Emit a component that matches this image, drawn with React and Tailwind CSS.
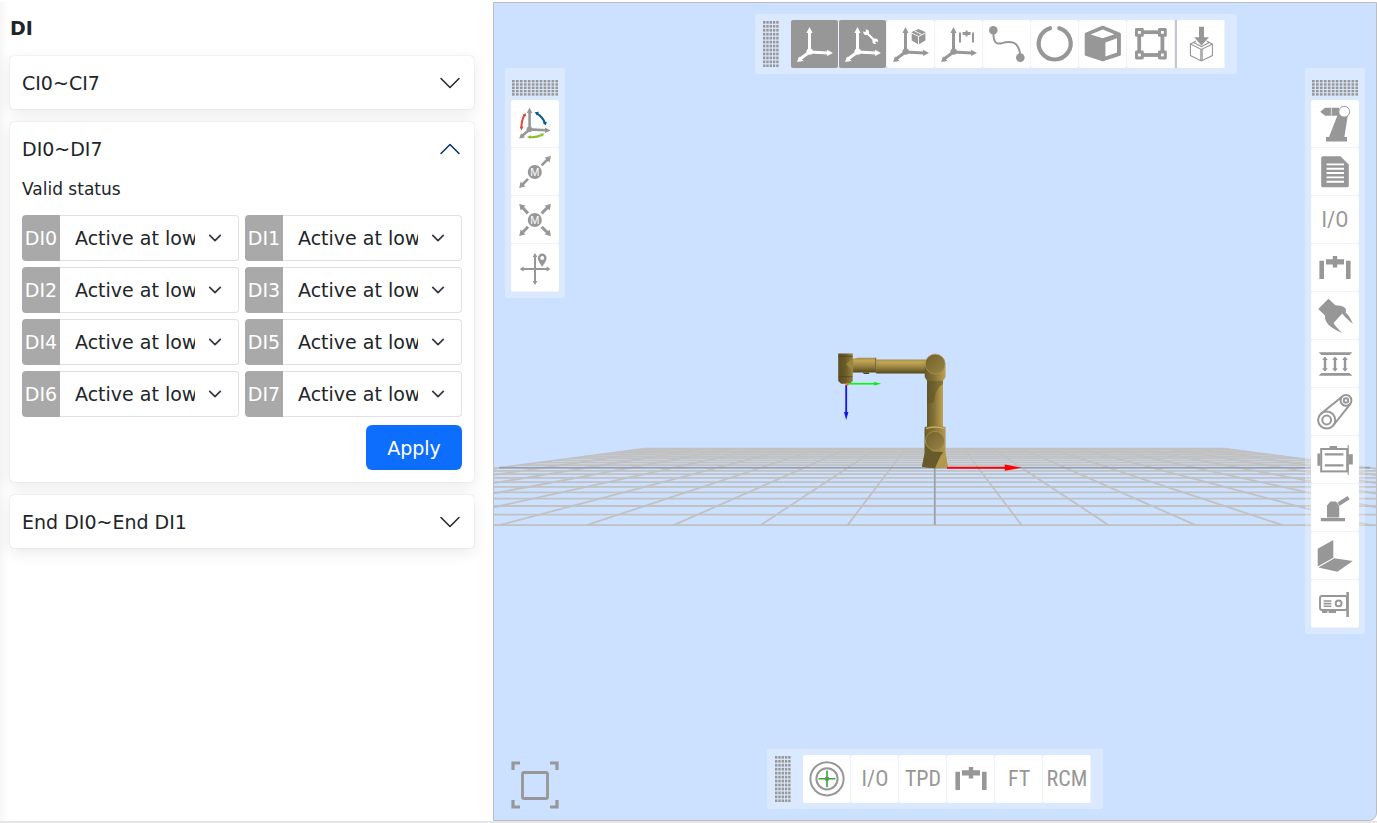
import React, { useState } from "react";
import clsx from "clsx";

const GRAY = "#979797";

// Icons, all drawn in a 48x48 box
const Icon = ({ children }) => (
  <svg viewBox="0 0 48 48" className="block h-12 w-12 shrink-0" fill="none" aria-hidden="true">
    {children}
  </svg>
);

const Axes = ({ color = GRAY }) => (
  <>
    <path d="M18.5 11V32M18.5 32L37 33M18.5 32L9 39" stroke={color} strokeWidth="3" />
    <circle cx="18.7" cy="31.6" r="3.2" fill={color} />
    <path
      d="M18.5 7L21.6 13H15.4ZM42 33L36 36V29.8ZM6 42L8 36.4L12.6 41Z"
      fill={color}
    />
  </>
);

const BaseCoordIcon = () => (
  <Icon>
    <Axes color="#fff" />
  </Icon>
);

const ToolCoordIcon = () => (
  <Icon>
    <Axes color="#fff" />
    <path d="M28 13L36 21" stroke="#fff" strokeWidth="2" />
    <circle cx="27.2" cy="12.2" r="2.8" fill="#fff" />
    <circle cx="36.2" cy="21.2" r="2.8" fill="#fff" />
    <path d="M26.6 11.4L23.6 9M36.8 22L40 25" stroke={GRAY} strokeWidth="2.2" />
  </Icon>
);

const WorkpieceCoordIcon = () => (
  <Icon>
    <Axes />
    <path d="M31.5 9L38.4 12V20.6L31.5 24.4L24.7 20.6V12Z" fill={GRAY} />
    <path d="M24.7 13L31.5 16.4L38.4 13M31.5 16V24.4M27.6 11L34.6 14.4" stroke="#fff" strokeWidth="0.9" />
  </Icon>
);

const ExtAxisCoordIcon = () => (
  <Icon>
    <Axes />
    <path d="M24 12.4H26V22.4H24ZM37 12.4H39V22.4H37ZM27.6 12H30.6V10.6H32.6V12H35.6V15H32.6V16.6H30.6V15H27.6Z" fill={GRAY} />
  </Icon>
);

const TrajectoryIcon = () => (
  <Icon>
    <path d="M10.3 11C10.3 22 12.5 24.4 18 23.4C26 21 30.5 21.6 33.4 24.6C36 28 37.3 31 37.3 37" stroke={GRAY} strokeWidth="2" />
    <circle cx="10.3" cy="10.3" r="4.3" fill={GRAY} />
    <circle cx="37.3" cy="37.6" r="4.3" fill={GRAY} />
  </Icon>
);

const RingIcon = () => (
  <Icon>
    <path d="M28.3 8.2A16 16 0 1 1 19.1 8.2" stroke={GRAY} strokeWidth="4.2" strokeLinecap="round" />
  </Icon>
);

const CubeIcon = () => (
  <Icon>
    <path
      d="M23.7 7L40.6 14V34.6L23.7 40L7 34.6V14Z"
      fill={GRAY}
      stroke={GRAY}
      strokeWidth="2.6"
      strokeLinejoin="round"
    />
    <path d="M11.7 14.5L23.7 9.6L35.4 14.2L23.7 18.2ZM26.4 22.4L38 18.2V32.6L26.4 36.4Z" fill="#fff" />
  </Icon>
);

const BoundaryIcon = () => (
  <Icon>
    <rect x="12.2" y="12.2" width="23.2" height="22.8" stroke={GRAY} strokeWidth="3.8" />
    {[[8, 8], [31, 8], [8, 30.6], [31, 30.6]].map(([x, y]) => (
      <g key={`${x}-${y}`}>
        <rect x={x} y={y} width="8.8" height="8.8" rx="1.4" fill={GRAY} />
        <rect x={x + 3} y={y + 3} width="2.8" height="2.8" fill="#fff" />
      </g>
    ))}
  </Icon>
);

const ImportIcon = () => (
  <Icon>
    <path
      d="M19 21L13.4 24V35.6L24.4 41L35.4 35.6V24L29.6 21M13.4 24L24.4 29.4L35.4 24M23.8 29.4V41M25.2 29.4V41M16.5 22.6L24.4 26.6L32.4 22.6"
      stroke={GRAY}
      strokeWidth="1.1"
    />
    <path d="M22 6.7H27V17.3H32L24.5 25.4L17.2 17.3H22Z" fill={GRAY} />
  </Icon>
);

const RotateIcon = () => (
  <Icon>
    <path d="M18.6 11V29.4L35 30.2M18.6 29.4L11 36" stroke={GRAY} strokeWidth="2.6" />
    <circle cx="18.4" cy="29.2" r="2.8" fill={GRAY} />
    <path d="M18.6 7.5L21.4 13H15.8ZM39.6 30.4L34 33V27.6ZM8.2 38.4L10 33.2L14 37.4Z" fill={GRAY} />
    <path d="M13.4 15C11.2 19 10.4 23 10.4 28" stroke="#dc4a38" strokeWidth="2" />
    <path d="M14.6 13L15.2 16.4L11.6 15ZM10.3 30.4L8.7 26.8H12.5Z" fill="#dc4a38" />
    <path d="M26 13.6C30 16 32.6 19 33.8 23" stroke="#0b5c8f" strokeWidth="2.2" />
    <path d="M23.6 12.2L28 11.8L26 15.6ZM34.8 25.6L31.6 22.8L35.8 21.8Z" fill="#0b5c8f" />
    <path d="M18.6 37C23.5 37.6 27 36.8 30.6 35" stroke="#86bf2f" strokeWidth="2" />
    <path d="M16 37L19.8 35.2L19.4 38.8ZM33.4 33.4L29.4 33.4L31.4 36.8Z" fill="#86bf2f" />
  </Icon>
);

const MotorLetter = () => (
  <>
    <circle cx="23.8" cy="24" r="7" fill={GRAY} />
    <text x="23.8" y="28" textAnchor="middle" fontSize="11" fill="#fff" fontFamily="Liberation Sans, sans-serif">
      M
    </text>
  </>
);

const SingleAxisIcon = () => (
  <Icon>
    <path d="M30.6 17.4L37 11M17 30.8L11 37" stroke={GRAY} strokeWidth="2.6" />
    <path d="M40 8L38.6 14.4L33.8 9.6ZM8.2 40L9.6 33.6L14.4 38.4Z" fill={GRAY} />
    <MotorLetter />
  </Icon>
);

const MultiAxisIcon = () => (
  <Icon>
    <path d="M30.6 17.4L37 11M17 30.8L11 37M17 17.4L11 11M30.6 30.8L37 37" stroke={GRAY} strokeWidth="3" />
    <path
      d="M40 8L38.6 14.4L33.8 9.6ZM8.2 40L9.6 33.6L14.4 38.4ZM8.2 8L9.6 14.4L14.4 9.6ZM40 40L38.6 33.6L33.8 38.4Z"
      fill={GRAY}
    />
    <MotorLetter />
  </Icon>
);

const MoveIcon = () => (
  <Icon>
    <path d="M24 12V38M12 25H36" stroke={GRAY} strokeWidth="2" />
    <path d="M24 9L26.4 13H21.6ZM24 41L26.4 37H21.6ZM8.6 25L12.6 22.6V27.4ZM39.6 25L35.6 22.6V27.4Z" fill={GRAY} />
    <path d="M31.2 23C29 19 26.8 17 26.8 14A4.4 4.4 0 0 1 35.6 14C35.6 17 33.4 19 31.2 23Z" fill={GRAY} />
    <circle cx="31.2" cy="14" r="1.9" fill="#fff" />
  </Icon>
);

const RobotIcon = () => (
  <Icon>
    <path d="M9.2 11.7L14 7.7H28V15.7H14Z" fill={GRAY} />
    <path d="M20.4 7.7V15.7" stroke="#ddd" strokeWidth="1" />
    <path d="M26.6 15L37 14L33.4 37H36V41.4H15V37H18Z" fill={GRAY} />
    <circle cx="33.2" cy="11.7" r="5.4" fill="#fff" stroke={GRAY} strokeWidth="1" />
  </Icon>
);

const DocIcon = () => (
  <Icon>
    <path d="M12 8.3H29.4L37.8 16.6V37.4Q37.8 39.3 36 39.3H12Q10.2 39.3 10.2 37.4V10.2Q10.2 8.3 12 8.3Z" fill={GRAY} />
    <path d="M15.6 16.4H33M15.6 20.7H33M15.6 25H33M15.6 29.4H33M15.6 33.8H33" stroke="#fff" strokeWidth="1.9" />
  </Icon>
);

const GripperAxisIcon = () => (
  <Icon>
    <path
      d="M8.4 16.7H13V35H8.4ZM35 16.7H39.6V35H35ZM15 15.2H21.8V12H26.2V15.2H33V20.6H26.2V23.6H21.8V20.6H15Z"
      fill={GRAY}
    />
  </Icon>
);

const ClawIcon = () => (
  <Icon>
    <path
      d="M17.4 6.7L7.3 17L14 23.6C13.4 31 19 35.6 31 41C27.4 37 24.4 34.6 22.6 31L31.2 21.6C34.6 25.6 37.6 29 42 31.8C39.6 26.4 38 23.6 34.6 20.4C36.6 15.6 32 13.6 24.4 13.2Z"
      fill={GRAY}
    />
  </Icon>
);

const ConveyorIcon = () => (
  <Icon>
    <path d="M7.6 12.3H41.4L38.6 15.1H10.4ZM10.4 33H38.6L41.4 35.8H7.6Z" fill={GRAY} />
    {[14, 24, 34].map((x) => (
      <g key={x}>
        <path d={`M${x} 18V30`} stroke={GRAY} strokeWidth="2.4" />
        <path d={`M${x} 16.4l2.8 3.6h-5.6ZM${x} 31.8l2.8-3.6h-5.6Z`} fill={GRAY} />
      </g>
    ))}
  </Icon>
);

const BeltIcon = () => (
  <Icon>
    <g stroke={GRAY} strokeWidth="2">
      <circle cx="15.7" cy="32" r="8.6" />
      <circle cx="15.7" cy="32" r="4.4" />
      <circle cx="35" cy="12.4" r="5.4" />
      <circle cx="35" cy="12.4" r="2.2" />
      <path d="M9.6 26L31 8.8M22.6 37L39.6 15.6" />
    </g>
  </Icon>
);

const MotorIcon = () => (
  <Icon>
    <rect x="10.2" y="13" width="26" height="22.4" stroke={GRAY} strokeWidth="2" />
    <path d="M13.8 18.4H32.4M13.8 29.4H32.4" stroke={GRAY} strokeWidth="2.2" />
    <path d="M37.2 9V38.8" stroke={GRAY} strokeWidth="1.2" />
    <path d="M18.6 10H26V13H18.6ZM6.4 17.4H9.4V29.8H6.4ZM37.4 18.2H41.8V28.4H37.4Z" fill={GRAY} />
  </Icon>
);

const JoystickIcon = () => (
  <Icon>
    <path d="M9.8 34H34V37.2H9.8ZM16 33.4V21.4L19.4 17.4H25L28.2 21.4V33.4Z" fill={GRAY} />
    <path d="M27.6 20.2L37.6 13.6" stroke={GRAY} strokeWidth="4" />
  </Icon>
);

const WallIcon = () => (
  <Icon>
    <path d="M6.7 16.7L22.3 8V25.7L6.7 34.4ZM23.4 26.3L41.8 29L26.4 39.7L7.3 35.4Z" fill={GRAY} />
  </Icon>
);

const DeviceIcon = () => (
  <Icon>
    <rect x="9" y="16" width="27" height="14" rx="2" stroke={GRAY} strokeWidth="1.9" />
    <path d="M12.6 21H20.4M12.6 23.6H20.4M12.6 26.2H20.4" stroke={GRAY} strokeWidth="1.6" />
    <circle cx="27.6" cy="23.4" r="2.9" stroke={GRAY} strokeWidth="1.9" />
    <path d="M36.6 12V37" stroke={GRAY} strokeWidth="2.6" />
    <path d="M11 30H16.4V33H11ZM17.6 30H25V33H17.6Z" fill={GRAY} />
  </Icon>
);

const TargetIcon = () => (
  <Icon>
    <circle cx="24" cy="23.8" r="16.6" stroke={GRAY} strokeWidth="2" />
    <circle cx="24" cy="23.8" r="10.6" stroke={GRAY} strokeWidth="2" />
    <path d="M24 15.4V32.2M15.6 23.8H32.4" stroke="#35a835" strokeWidth="1.6" />
    <circle cx="24" cy="23.8" r="2.4" fill="#5f9a5f" />
  </Icon>
);

const TextIcon = ({ children }) => (
  <span className="font-['Roboto_Condensed',Roboto,sans-serif] text-[22px] leading-none text-[#979797]">
    {children}
  </span>
);

const Handle = ({ vertical }) => {
  const cells = [];
  for (let i = 0; i < 12; i++) {
    for (let j = 0; j < 5; j++) cells.push([i * 3.95, j * 3.3]);
  }
  return (
    <svg
      viewBox={vertical ? "0 0 16 46" : "0 0 46 16"}
      className={vertical ? "h-[46px] w-4" : "h-4 w-[46px]"}
      aria-hidden="true"
    >
      {cells.map(([a, b]) => (
        <rect
          key={`${a}-${b}`}
          x={vertical ? b : a}
          y={vertical ? a : b}
          width={vertical ? 2.4 : 2.7}
          height={vertical ? 2.7 : 2.4}
          fill={GRAY}
        />
      ))}
    </svg>
  );
};

const ToolButton = ({ label, active, column, children }) => (
  <button
    type="button"
    title={label}
    aria-label={label}
    className={clsx(
      "flex h-12 w-12 shrink-0 items-center justify-center rounded-xs",
      column ? "shadow-[inset_0_-1px_0_#edf4ff]" : "shadow-[inset_-1px_0_0_#edf4ff]",
      active ? "bg-[#979797]" : "bg-white"
    )}
  >
    {children}
  </button>
);

const topTools = [
  { label: "Base coordinate", icon: <BaseCoordIcon />, active: true },
  { label: "Tool coordinate", icon: <ToolCoordIcon />, active: true },
  { label: "Workpiece coordinate", icon: <WorkpieceCoordIcon /> },
  { label: "Extended axis coordinate", icon: <ExtAxisCoordIcon /> },
  { label: "Trajectory", icon: <TrajectoryIcon /> },
  { label: "Interference ring", icon: <RingIcon /> },
  { label: "Interference cube", icon: <CubeIcon /> },
  { label: "Boundary", icon: <BoundaryIcon /> },
];

const leftTools = [
  { label: "Rotate", icon: <RotateIcon /> },
  { label: "Single axis", icon: <SingleAxisIcon /> },
  { label: "Multi axis", icon: <MultiAxisIcon /> },
  { label: "Move", icon: <MoveIcon /> },
];

const rightTools = [
  { label: "Robot", icon: <RobotIcon /> },
  { label: "Program", icon: <DocIcon /> },
  { label: "I/O", icon: <TextIcon>I/O</TextIcon> },
  { label: "Extended axis", icon: <GripperAxisIcon /> },
  { label: "Gripper", icon: <ClawIcon /> },
  { label: "Force", icon: <ConveyorIcon /> },
  { label: "Conveyor", icon: <BeltIcon /> },
  { label: "Motor", icon: <MotorIcon /> },
  { label: "Polishing", icon: <JoystickIcon /> },
  { label: "Wall", icon: <WallIcon /> },
  { label: "Device", icon: <DeviceIcon /> },
];

const bottomTools = [
  { label: "Target", icon: <TargetIcon /> },
  { label: "I/O status", icon: <TextIcon>I/O</TextIcon> },
  { label: "TPD", icon: <TextIcon>TPD</TextIcon> },
  { label: "Axis status", icon: <GripperAxisIcon /> },
  { label: "FT", icon: <TextIcon>FT</TextIcon> },
  { label: "RCM", icon: <TextIcon>RCM</TextIcon> },
];

// Perspective floor: 20 x 20 cells, horizon at y = 410
const CX = 934.6;
const depth = (i) => 1150 / (20 - i);
const steps = Array.from({ length: 21 }, (_, i) => i - 10);

const Scene = () => (
  <svg
    viewBox="493 2 884 819"
    preserveAspectRatio="xMidYMid slice"
    className="absolute inset-0 h-full w-full"
    role="img"
    aria-label="Robot model"
  >
    <defs>
      <linearGradient id="tube" x1="0" x2="1" y1="0" y2="0">
        <stop offset="0" stopColor="#665928" />
        <stop offset="0.45" stopColor="#857235" />
        <stop offset="1" stopColor="#c0a254" />
      </linearGradient>
      <linearGradient id="wrist" x1="0" x2="1" y1="0" y2="0">
        <stop offset="0" stopColor="#5a4e22" />
        <stop offset="0.5" stopColor="#6a5c28" />
        <stop offset="1" stopColor="#98833f" />
      </linearGradient>
      <linearGradient id="arm" x1="0" x2="0" y1="0" y2="1">
        <stop offset="0" stopColor="#a68d46" />
        <stop offset="0.2" stopColor="#c4a657" />
        <stop offset="0.6" stopColor="#92803f" />
        <stop offset="1" stopColor="#534719" />
      </linearGradient>
      <linearGradient id="cap" x1="0" x2="1" y1="0" y2="1">
        <stop offset="0" stopColor="#6f602c" />
        <stop offset="1" stopColor="#9a8544" />
      </linearGradient>
    </defs>

    <g stroke="#c1c1c1" strokeWidth="1.8">
      {steps.map((i) => {
        const y = 410.4 + depth(i);
        const half = 7.583 * depth(i);
        return <line key={`r${i}`} x1={CX - half} x2={CX + half} y1={y} y2={y} />;
      })}
      {steps.map((j) => (
        <line
          key={`c${j}`}
          x1={CX + j * 0.7583 * depth(-10)}
          y1={410.4 + depth(-10)}
          x2={CX + j * 0.7583 * depth(10)}
          y2={410.4 + depth(10)}
        />
      ))}
    </g>
    <path d="M498 467.9H1371M934.8 449V525" stroke="#979fac" strokeWidth="1.5" />

    {/* robot */}
    <path d="M947 467.8H1007" stroke="#f00" strokeWidth="2" />
    <path d="M1005 464.6L1022 467.8L1005 471Z" fill="#f00" />
    <path d="M927 380H943V428H927Z" fill="url(#tube)" />
    <path d="M927 380H943V384C937 388 935 394 934 402L927 404Z" fill="#5f5326" opacity="0.55" />
    <path d="M924.7 427Q935 424 945.6 427V455L948 467Q935 470 922 467L924.7 453Z" fill="url(#tube)" />
    <path d="M924.7 428L932 452L943 452L935 468.4L922 467L924.7 453Z" fill="#675a2b" />
    <path d="M941 455L945.6 453L948 467L935 468.4Z" fill="#b2974c" />
    <path d="M926 428.6Q935 425.6 944.6 428.6" stroke="#cdb060" strokeWidth="1.4" fill="none" />
    <circle cx="935" cy="441" r="9.6" fill="url(#cap)" stroke="#b0954b" strokeWidth="0.8" />
    <path d="M876 359.3H927V373.4H876Z" fill="url(#arm)" />
    <path d="M851 359L858 357.6H876V372.4H852Z" fill="url(#arm)" />
    <path d="M875.6 357.6V372.4" stroke="#6a5c2b" strokeWidth="0.8" />
    <path d="M862 372.4H869V373.8H864Z" fill="#534719" />
    <path d="M838 353.4H852.6V381L850 383.6H841L838 381Z" fill="url(#wrist)" />
    <path d="M846 364L853 358V372.4Z" fill="#9a8541" />
    <path d="M838 356.2H852.6M838.4 376.6H852" stroke="#4c411a" strokeWidth="0.7" />
    <path d="M924.7 366H945.6V377L943 380.8H927L924.7 377Z" fill="url(#tube)" />
    <circle cx="935.2" cy="364" r="10" fill="url(#cap)" stroke="#ae9349" strokeWidth="0.8" />
    <path d="M849 383.7H876" stroke="#0f0" strokeWidth="1.6" />
    <path d="M874 382L881 383.7L874 385.4Z" fill="#0e0" />
    <path d="M846 385V415" stroke="#1414f0" strokeWidth="1.8" />
    <path d="M843.8 412H848.2L846 420Z" fill="#1414f0" />
    <circle cx="847" cy="384.2" r="1.6" fill="#e8761a" />
  </svg>
);

const Chevron = ({ open }) => (
  <svg
    viewBox="0 0 16 16"
    className={clsx("h-6 w-6", open ? "rotate-180 text-[#052c65]" : "text-[#212529]")}
    fill="currentColor"
    aria-hidden="true"
  >
    <path
      fillRule="evenodd"
      d="M1.646 4.646a.5.5 0 0 1 .708 0L8 10.293l5.646-5.647a.5.5 0 0 1 .708.708l-6 6a.5.5 0 0 1-.708 0l-6-6a.5.5 0 0 1 0-.708"
    />
  </svg>
);

const AccordionItem = ({ title, open, onToggle, children }) => (
  <section className="rounded-sm bg-white shadow-[0_4px_16px_rgba(0,0,0,0.09),0_0_1px_rgba(80,80,160,0.35)]">
    <h2>
      <button
        type="button"
        aria-expanded={open}
        onClick={onToggle}
        className="flex h-[53px] w-full items-center justify-between px-3 text-left"
      >
        <span>{title}</span>
        <Chevron open={open} />
      </button>
    </h2>
    {open && children}
  </section>
);

const DiSelect = ({ name, value, onChange }) => (
  <div className="flex h-[46px]">
    <label
      htmlFor={name}
      className="flex w-[38px] shrink-0 items-center justify-center rounded-l-sm bg-[#a9a9a9] text-white"
    >
      {name}
    </label>
    <div className="relative min-w-0 flex-1">
      <select
        id={name}
        value={value}
        onChange={(e) => onChange(name, e.target.value)}
        className="h-full w-full appearance-none overflow-hidden rounded-r-sm border border-l-0 border-[#dee2e6] bg-white pr-[43px] pl-[15px]"
      >
        <option value="0">Active at low level</option>
        <option value="1">Active at high level</option>
      </select>
      <svg
        viewBox="0 0 16 16"
        className="pointer-events-none absolute top-4 right-4 h-[14px] w-4"
        fill="none"
        stroke="#343a40"
        strokeWidth="2"
        strokeLinecap="round"
        strokeLinejoin="round"
        aria-hidden="true"
      >
        <path d="m2 5 6 6 6-6" />
      </svg>
    </div>
  </div>
);

const diNames = ["DI0", "DI1", "DI2", "DI3", "DI4", "DI5", "DI6", "DI7"];

const App = () => {
  const [opened, setOpened] = useState("di");
  const [levels, setLevels] = useState({});

  const toggle = (id) => setOpened(opened === id ? "" : id);
  const changeLevel = (name, value) => setLevels({ ...levels, [name]: value });

  return (
    <div className="grid h-screen grid-cols-[493fr_884fr] overflow-hidden border-b-2 border-[#e6e6e6] bg-white pt-[2px] font-['DejaVu_Sans',Verdana,sans-serif] text-[19px] leading-7 text-[#212529]">
      <aside className="min-w-0 overflow-y-auto pt-3 pr-[19px] pl-[10px] shadow-[inset_8px_0_8px_-6px_rgba(0,0,0,0.06)]">
        <h1 className="mb-[14px] font-bold">DI</h1>
        <div className="flex flex-col gap-[13px]">
          <AccordionItem title="CI0~CI7" open={opened === "ci"} onToggle={() => toggle("ci")} />
          <AccordionItem title="DI0~DI7" open={opened === "di"} onToggle={() => toggle("di")}>
            <div className="px-3 pb-3">
              <p className="mb-3 text-[17px]">Valid status</p>
              <div className="grid grid-cols-2 gap-[6px]">
                {diNames.map((name) => (
                  <DiSelect key={name} name={name} value={levels[name] || "0"} onChange={changeLevel} />
                ))}
              </div>
              <div className="mt-2 flex justify-end">
                <button type="button" className="h-[45px] w-24 rounded-md bg-[#0d6efd] text-white">
                  Apply
                </button>
              </div>
            </div>
          </AccordionItem>
          <AccordionItem title="End DI0~End DI1" open={opened === "end"} onToggle={() => toggle("end")} />
        </div>
      </aside>

      <main className="relative overflow-hidden rounded-br-lg border border-[#bdbdbd] bg-[#cce0ff]">
        <Scene />

        {/* Top toolbar */}
        <div className="absolute top-[11px] left-[261px] flex items-center rounded-xs bg-white/30 py-[6px] pr-3 pl-2">
          <div className="mr-3 flex">
            <Handle vertical />
          </div>
          {topTools.map((t) => (
            <ToolButton key={t.label} label={t.label} active={t.active}>
              {t.icon}
            </ToolButton>
          ))}
          <div className="h-12 w-[2px] bg-[#c8c8c8]" />
          <ToolButton label="Import model">
            <ImportIcon />
          </ToolButton>
        </div>

        {/* Side toolbars */}
        <div className="absolute top-[65px] left-[11px] flex flex-col items-center rounded-xs bg-white/30 px-[6px] pt-3 pb-[6px]">
          <div className="mb-1 flex">
            <Handle />
          </div>
          {leftTools.map((t) => (
            <ToolButton key={t.label} label={t.label} column>
              {t.icon}
            </ToolButton>
          ))}
        </div>
        <div className="absolute top-[65px] right-[11px] flex flex-col items-center rounded-xs bg-white/30 px-[6px] pt-3 pb-[6px]">
          <div className="mb-1 flex">
            <Handle />
          </div>
          {rightTools.map((t) => (
            <ToolButton key={t.label} label={t.label} column>
              {t.icon}
            </ToolButton>
          ))}
        </div>

        {/* Bottom toolbar */}
        <div className="absolute bottom-[11px] left-[273px] flex items-center rounded-xs bg-white/30 py-[6px] pr-3 pl-2">
          <div className="mr-3 flex">
            <Handle vertical />
          </div>
          {bottomTools.map((t) => (
            <ToolButton key={t.label} label={t.label}>
              {t.icon}
            </ToolButton>
          ))}
        </div>

        <button type="button" aria-label="Full screen" className="absolute bottom-[11px] left-[17px]">
          <svg viewBox="0 0 48 48" className="block h-12 w-12" fill="none" stroke={GRAY} aria-hidden="true">
            <path d="M9 2H2V9M39 2H46V9M2 39V46H9M46 39V46H39" strokeWidth="3.2" />
            <rect x="11.5" y="11.5" width="25" height="26" rx="1.6" strokeWidth="2.8" />
          </svg>
        </button>
      </main>
    </div>
  );
};

export default App;
